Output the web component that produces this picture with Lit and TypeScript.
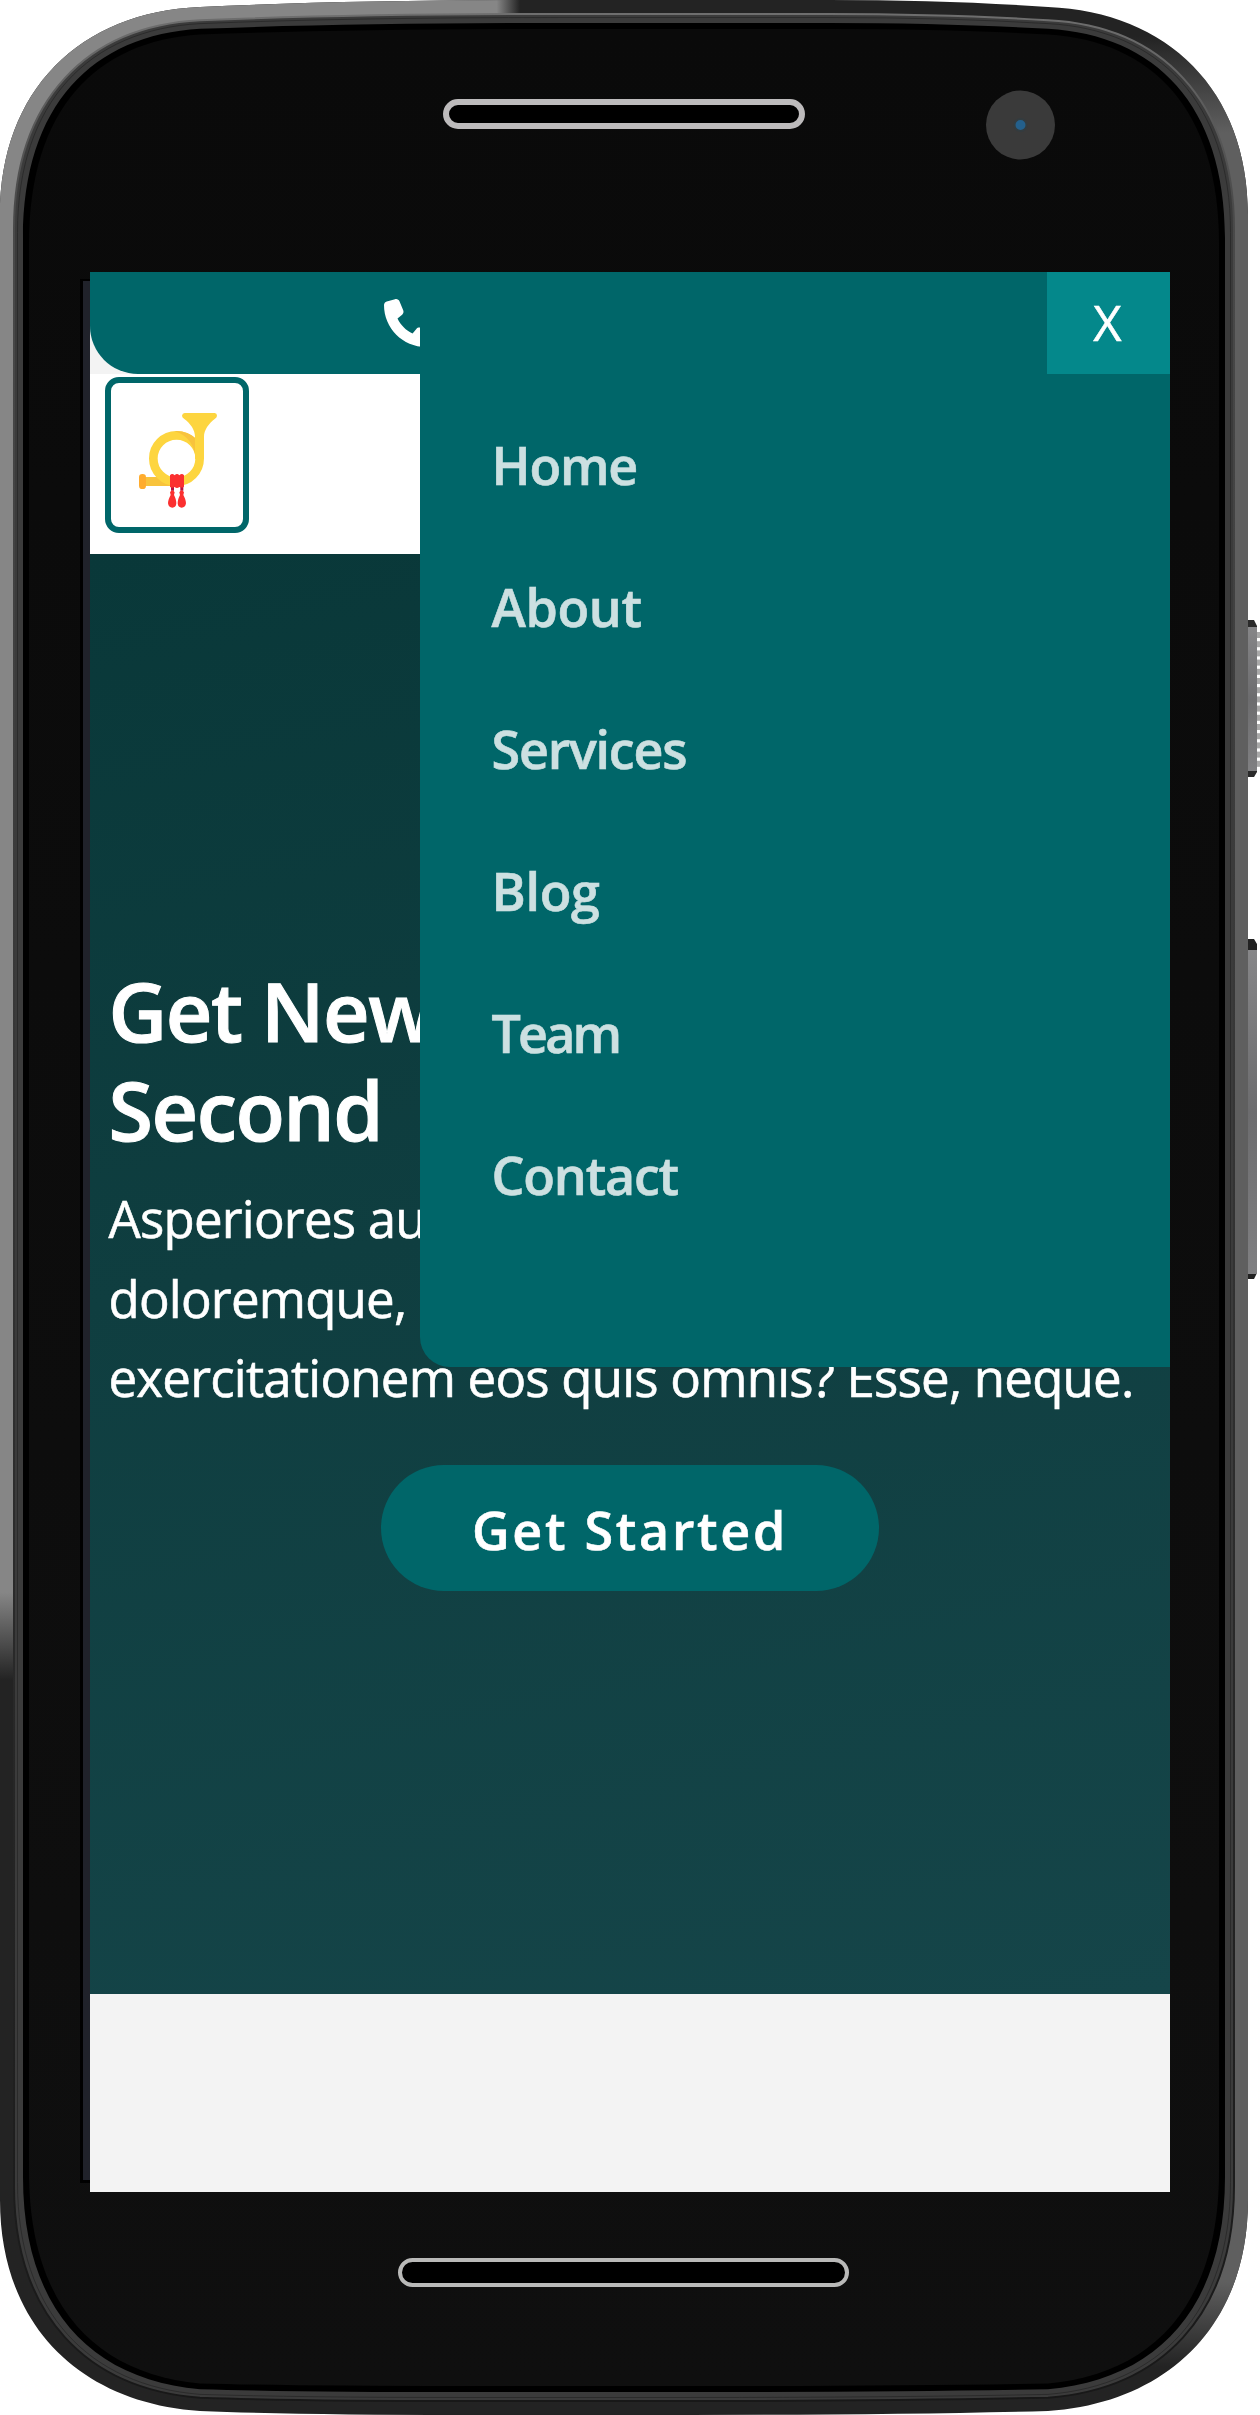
import { LitElement, html, css, svg } from "lit";
import { customElement } from "lit/decorators.js";
import { styleMap } from "lit/directives/style-map.js";

/** Outline of the handset, pulled inwards by d pixels on every side. */
function outline(d: number): string {
  const W = 1248;
  const H = 2415;
  const sy = 215 + d;
  const c1 = 90 + 0.65 * d;
  const c2 = 80 + 0.55 * d;
  const c2y = 12 + d;
  const ey = 7 + 0.95 * d;
  return [
    `M${d} ${sy}`,
    `C${d} ${c1} ${c2} ${c2y} 200 ${ey}`,
    `Q350 ${d} 560 ${d}`,
    `H${W - 420}`,
    `Q${W - 300} ${d} ${W - 200} ${ey}`,
    `C${W - c2} ${c2y} ${W - d} ${c1} ${W - d} ${sy}`,
    `V${H - sy}`,
    `C${W - d} ${H - c1} ${W - c2} ${H - c2y} ${W - 200} ${H - ey + 3}`,
    `Q${W - 350} ${H - d} ${W - 560} ${H - d}`,
    `H460`,
    `Q300 ${H - d} 200 ${H - ey + 3}`,
    `C${c2} ${H - c2y} ${d} ${H - c1} ${d} ${H - sy}`,
    "Z",
  ].join(" ");
}

@customElement("phone-frame")
export class PhoneFrame extends LitElement {
  static styles = css`
    :host {
      display: block;
    }
    svg {
      display: block;
    }
  `;

  render() {
    const ridges = Array.from({ length: 15 }, (_, i) => 632 + i * 9.2);
    return html`<svg width="1260" height="2415" viewBox="0 0 1260 2415">
      <defs>
        <clipPath id="body"><path d=${outline(0)} /></clipPath>
        <linearGradient id="lightX" x1="0" x2="1">
          <stop offset="0.955" stop-color="#868686" />
          <stop offset="1" stop-color="#868686" stop-opacity="0" />
        </linearGradient>
        <linearGradient id="lightY" x1="0" x2="0" y1="0" y2="1">
          <stop offset="0.94" stop-color="#868686" />
          <stop offset="1" stop-color="#868686" stop-opacity="0" />
        </linearGradient>
        <linearGradient id="rightY" x1="0" x2="0" y1="0" y2="1">
          <stop offset="0.015" stop-color="#5f5f5f" stop-opacity="0" />
          <stop offset="0.055" stop-color="#5f5f5f" />
          <stop offset="0.945" stop-color="#5f5f5f" />
          <stop offset="0.98" stop-color="#5f5f5f" stop-opacity="0" />
        </linearGradient>
        <linearGradient id="rimY" x1="0" x2="0" y1="0" y2="1">
          <stop offset="0" stop-color="#6e6e6e" />
          <stop offset="0.08" stop-color="#4a4a4a" />
          <stop offset="1" stop-color="#181818" />
        </linearGradient>
        <linearGradient id="glass" x1="0" x2="0" y1="0" y2="1">
          <stop offset="0" stop-color="#0a0a0a" />
          <stop offset="1" stop-color="#0f0f0f" />
        </linearGradient>
        <linearGradient id="key" x1="0" x2="0" y1="0" y2="1">
          <stop offset="0" stop-color="#868688" />
          <stop offset="0.5" stop-color="#6c6c6e" />
          <stop offset="1" stop-color="#808082" />
        </linearGradient>
      </defs>

      <path d="M1246 620h8l3 6v146l-3 5h-8z" fill="#2a2a2a" />
      <rect x="1246" y="627" width="11" height="144" fill="url(#key)" />
      ${ridges.map((y) => svg`<rect x="1257" y=${y} width="3" height="6" fill="#a9a9a9" />`)}
      <path d="M1246 939h8l3 5v329l-3 6h-8z" fill="#222" />
      <rect x="1246" y="950" width="11" height="324" fill="url(#key)" />

      <g clip-path="url(#body)">
        <rect width="1260" height="2415" fill="#232323" />
        <rect width="520" height="220" fill="url(#lightX)" />
        <rect y="219" width="100" height="1461" fill="url(#lightY)" />
        <rect x="1130" width="130" height="2415" fill="url(#rightY)" />
      </g>
      <path d=${outline(14)} fill="#3b3b3b" stroke="url(#rimY)" stroke-width="2" />
      <path d=${outline(17.5)} fill="none" stroke="#2b2b2b" stroke-width="1" />
      <path d=${outline(23)} fill="#000" />
      <path d=${outline(29)} fill="url(#glass)" />

      <rect x="80" y="279" width="10" height="1904" fill="#000" />
      <rect x="83" y="281" width="7" height="1899" fill="#20222a" />

      <rect x="446" y="102" width="356" height="24" rx="12" fill="#000" stroke="#bdbbbc" stroke-width="6" />
      <circle cx="1020.500" cy="125" r="34.500" fill="#3a3a3a" />
      <circle cx="1020.500" cy="125" r="6" fill="#24608c" stroke="#333c40" stroke-width="2" />
      <rect x="400" y="2260" width="447" height="25" rx="12.500" fill="#000" stroke="#b9b9b8" stroke-width="4" />
    </svg>`;
  }
}

@customElement("horn-logo")
export class HornLogo extends LitElement {
  static styles = css`
    :host {
      display: block;
      width: 132px;
      height: 144px;
    }
    svg {
      display: block;
    }
  `;

  render() {
    return html`<svg width="132" height="144" viewBox="93 369 396 432">
      <rect x="190" y="651" width="100" height="27" fill="#f8c33c" />
      <rect x="177" y="642" width="21" height="45" rx="10" fill="#ffac2e" />
      <circle cx="289.500" cy="595.500" r="69.500" fill="none" stroke="#fdd53f" stroke-width="26" />
      <path d="M283 513C308 511 330 520 347 535V594C345 560 326 527 283 513Z" fill="#f8c33c" />
      <path
        d="M314 459H404Q411 460 411 467Q411 473 404 477C386 491 372 510 372 530V597H345V530C345 510 332 491 313 477Q306 473 306 467Q307 459 314 459Z"
        fill="#fdd53f"
      />
      <path d="M273 680h9v12h-9zM301 680h9v12h-9z" fill="#b5103f" />
      <path
        d="M270 646q6-8 14 0q7-8 14 0q8-8 14 0v34q-6 5-14 1q-7 6-14 0q-8 4-14 0z"
        fill="#fb3030"
      />
      <path
        d="M270 697q7-13 14 0l-2 8c4 8 7 16 7 25q-1 13-12 13t-13-13c0-9 4-17 8-25zM298 697q7-13 14 0l-2 8c4 8 8 16 8 25q-2 13-13 13t-12-13c0-9 3-17 7-25z"
        fill="#fb3030"
      />
    </svg>`;
  }
}

interface MenuLink {
  label: string;
  tracking: number;
}

const LINKS: MenuLink[] = [
  { label: "Home", tracking: -1.2 },
  { label: "About", tracking: -0.4 },
  { label: "Services", tracking: -1.2 },
  { label: "Blog", tracking: -0.3 },
  { label: "Team", tracking: -2.8 },
  { label: "Contact", tracking: -1.2 },
];

@customElement("side-menu")
export class SideMenu extends LitElement {
  static styles = css`
    :host {
      display: block;
      box-sizing: border-box;
      width: 750px;
      height: 1095px;
      background: #006669;
      border-bottom-left-radius: 30px;
    }
    .head {
      display: flex;
      justify-content: flex-end;
    }
    .close {
      width: 123px;
      height: 102px;
      padding: 0 2px 2px 0;
      border: 0;
      background: #04888b;
      color: #fff;
      font: 400 49px/100px "Open Sans", "Noto Sans", sans-serif;
      -webkit-text-stroke: 0.5px currentColor;
    }
    .list {
      margin: 20px 0 0;
      padding: 0 0 0 71.500px;
      list-style: none;
    }
    .item {
      height: 142.100px;
      color: #cce0e1;
      font: 600 52px/142.100px "Open Sans", "Noto Sans", sans-serif;
      -webkit-text-stroke: 0.6px currentColor;
    }
  `;

  render() {
    return html`
      <div class="head"><button class="close">X</button></div>
      <ul class="list">
        ${LINKS.map(
          (l) => html`<li class="item" style=${styleMap({ letterSpacing: `${l.tracking}px` })}>${l.label}</li>`,
        )}
      </ul>
    `;
  }
}

@customElement("app-root")
export class AppRoot extends LitElement {
  static styles = css`
    :host {
      display: block;
      position: relative;
      box-sizing: border-box;
      width: 1260px;
      height: 2415px;
      padding: 272px 90px 223px;
      overflow: hidden;
      background: #fff;
      font-family: "Open Sans", "Noto Sans", sans-serif;
    }
    .frame {
      position: absolute;
      inset: 0;
    }
    .screen {
      position: relative;
      display: flex;
      flex-direction: column;
      width: 1080px;
      height: 1920px;
      overflow: hidden;
      background: #f3f3f3;
    }
    .topbar {
      display: flex;
      align-items: center;
      box-sizing: border-box;
      height: 102px;
      padding-left: 294px;
      background: #006669;
      border-radius: 0 0 48px 48px;
    }
    .brand {
      box-sizing: border-box;
      height: 180px;
      padding: 3px 15px;
      background: #fff;
    }
    .logo {
      box-sizing: border-box;
      width: 144px;
      height: 156px;
      border: 6px solid #006669;
      border-radius: 14px;
    }
    .hero {
      display: flex;
      flex-direction: column;
      align-items: center;
      box-sizing: border-box;
      height: 1440px;
      padding: 407px 18.500px 0;
      background: linear-gradient(168deg, #093839 0%, #0f3e40 45%, #154549 100%);
      color: #fff;
    }
    .title {
      align-self: stretch;
      margin: 0 0 20px;
      font-size: 81px;
      font-weight: 600;
      line-height: 99px;
      letter-spacing: -1.500px;
      -webkit-text-stroke: 1px currentColor;
    }
    .copy {
      align-self: stretch;
      margin: 0 0 47px;
      font-size: 51px;
      line-height: 79.700px;
      letter-spacing: -0.780px;
      white-space: nowrap;
      -webkit-text-stroke: 0.6px currentColor;
    }
    .cta {
      box-sizing: border-box;
      width: 498px;
      height: 126px;
      padding: 3px 0 0;
      border: 0;
      border-radius: 63px;
      background: #006669;
      color: #fff;
      font: 600 52px/123px "Open Sans", "Noto Sans", sans-serif;
      letter-spacing: 2.700px;
      -webkit-text-stroke: 0.6px currentColor;
    }
    .menu {
      position: absolute;
      top: 0;
      right: 0;
    }
  `;

  render() {
    return html`
      <phone-frame class="frame"></phone-frame>
      <main class="screen">
        <div class="topbar">
          <svg width="48" height="48" viewBox="0 0 512 512" fill="#fff">
            <path
              d="M164.900 24.600c-7.700-18.600-28-28.500-47.400-23.200l-88 24C12.100 30.200 0 46 0 64C0 311.400 200.600 512 448 512c18 0 33.800-12.100 38.600-29.500l24-88c5.300-19.400-4.600-39.700-23.200-47.400l-96-40c-16.300-6.800-35.200-2.100-46.300 11.600L304.700 368C234.300 334.700 177.300 277.700 144 207.300L193.300 167c13.700-11.200 18.400-30 11.600-46.300l-40-96z"
            />
          </svg>
        </div>
        <header class="brand"><div class="logo"><horn-logo></horn-logo></div></header>
        <section class="hero">
          <h1 class="title">Get New<br />Second</h1>
          <p class="copy">
            Asperiores au<br />doloremque,<br />exercitationem eos quis omnis? Esse, neque.
          </p>
          <button class="cta">Get Started</button>
        </section>
        <side-menu class="menu"></side-menu>
      </main>
    `;
  }
}
